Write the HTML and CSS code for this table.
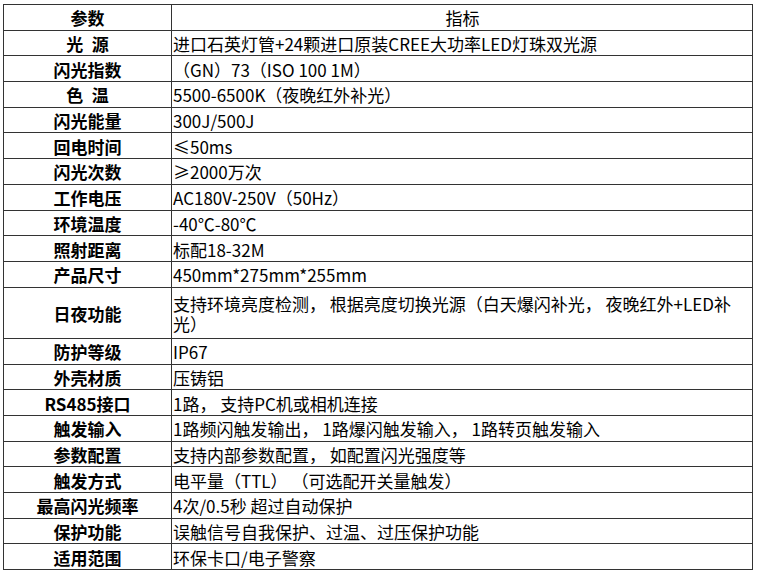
FILE: index.html
```html
<!DOCTYPE html>
<html lang="zh-CN">
<head>
<meta charset="utf-8">
<title>参数指标</title>
<link rel="stylesheet" href="styles.css">
</head>
<body>
<table class="spec">
  <colgroup><col class="c-name"><col class="c-val"></colgroup>
  <tr><th>参数</th><td class="head">指标</td></tr>
  <tr><th>光&ensp;源</th><td>进口石英灯管+24颗进口原装CREE大功率LED灯珠双光源</td></tr>
  <tr><th>闪光指数</th><td>（GN）73（ISO 100 1M）</td></tr>
  <tr><th>色&ensp;温</th><td>5500-6500K（夜晚红外补光）</td></tr>
  <tr><th>闪光能量</th><td>300J/500J</td></tr>
  <tr><th>回电时间</th><td>≤50ms</td></tr>
  <tr><th>闪光次数</th><td>≥2000万次</td></tr>
  <tr><th>工作电压</th><td>AC180V-250V（50Hz）</td></tr>
  <tr><th>环境温度</th><td>-40℃-80℃</td></tr>
  <tr><th>照射距离</th><td>标配18-32M</td></tr>
  <tr><th>产品尺寸</th><td>450mm*275mm*255mm</td></tr>
  <tr class="double"><th>日夜功能</th><td>支持环境亮度检测， 根据亮度切换光源（白天爆闪补光， 夜晚红外+LED补光）</td></tr>
  <tr><th>防护等级</th><td>IP67</td></tr>
  <tr><th>外壳材质</th><td>压铸铝</td></tr>
  <tr><th>RS485接口</th><td>1路， 支持PC机或相机连接</td></tr>
  <tr><th>触发输入</th><td>1路频闪触发输出， 1路爆闪触发输入， 1路转页触发输入</td></tr>
  <tr><th>参数配置</th><td>支持内部参数配置， 如配置闪光强度等</td></tr>
  <tr><th>触发方式</th><td>电平量（TTL） （可选配开关量触发）</td></tr>
  <tr><th>最高闪光频率</th><td>4次/0.5秒 超过自动保护</td></tr>
  <tr><th>保护功能</th><td>误触信号自我保护、过温、过压保护功能</td></tr>
  <tr><th>适用范围</th><td>环保卡口/电子警察</td></tr>
</table>
</body>
</html>
```

FILE: styles.css
```css
html, body {
  margin: 0;
  padding: 0;
  background: #ffffff;
}

body {
  padding: 4px 0 0 3px;
  font-family: "Noto Sans CJK SC", "Noto Sans", sans-serif;
  color: #000;
}

.spec {
  border-collapse: collapse;
  width: 750px;
  table-layout: fixed;
}

.c-name { width: 168px; }

.spec th,
.spec td {
  border: 1px solid #333;
  height: 25.7px;
  padding: 2px 0 0 1px;
  box-sizing: border-box;
  line-height: 20px;
  font-size: 17px;
  vertical-align: middle;
  white-space: nowrap;
}

.spec th {
  font-weight: 700;
  text-align: center;
  padding-left: 0;
}

.spec td {
  font-weight: 400;
  text-align: left;
}

.spec td.head {
  text-align: center;
}

.spec tr.double th,
.spec tr.double td {
  height: 51.4px;
  white-space: normal;
}
```
